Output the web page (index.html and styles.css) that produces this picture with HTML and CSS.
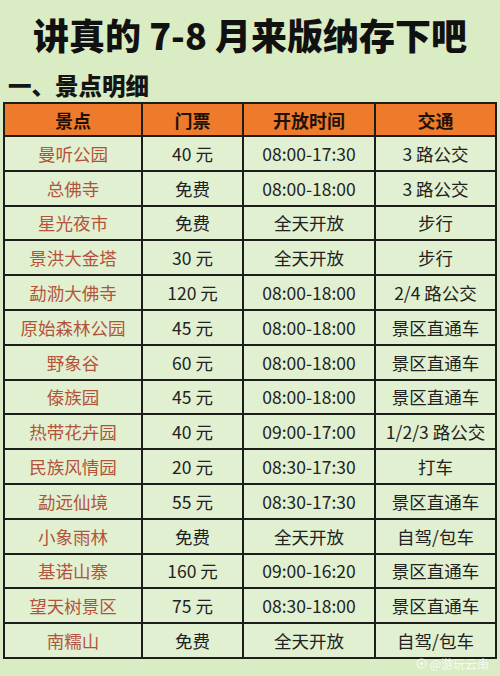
FILE: index.html
```html
<!DOCTYPE html>
<html lang="zh">
<head>
<meta charset="utf-8">
<link rel="stylesheet" href="styles.css">
</head>
<body>
<div class="page">
  <h1 class="title">讲真的 7-8 月来版纳存下吧</h1>
  <h2 class="subtitle">一、景点明细</h2>
  <div class="table">
    <div class="cell head">景点</div><div class="cell head">门票</div><div class="cell head">开放时间</div><div class="cell head">交通</div>
    <div class="cell name">曼听公园</div><div class="cell">40 元</div><div class="cell">08:00-17:30</div><div class="cell">3 路公交</div>
    <div class="cell name">总佛寺</div><div class="cell">免费</div><div class="cell">08:00-18:00</div><div class="cell">3 路公交</div>
    <div class="cell name">星光夜市</div><div class="cell">免费</div><div class="cell">全天开放</div><div class="cell">步行</div>
    <div class="cell name">景洪大金塔</div><div class="cell">30 元</div><div class="cell">全天开放</div><div class="cell">步行</div>
    <div class="cell name">勐泐大佛寺</div><div class="cell">120 元</div><div class="cell">08:00-18:00</div><div class="cell">2/4 路公交</div>
    <div class="cell name">原始森林公园</div><div class="cell">45 元</div><div class="cell">08:00-18:00</div><div class="cell">景区直通车</div>
    <div class="cell name">野象谷</div><div class="cell">60 元</div><div class="cell">08:00-18:00</div><div class="cell">景区直通车</div>
    <div class="cell name">傣族园</div><div class="cell">45 元</div><div class="cell">08:00-18:00</div><div class="cell">景区直通车</div>
    <div class="cell name">热带花卉园</div><div class="cell">40 元</div><div class="cell">09:00-17:00</div><div class="cell">1/2/3 路公交</div>
    <div class="cell name">民族风情园</div><div class="cell">20 元</div><div class="cell">08:30-17:30</div><div class="cell">打车</div>
    <div class="cell name">勐远仙境</div><div class="cell">55 元</div><div class="cell">08:30-17:30</div><div class="cell">景区直通车</div>
    <div class="cell name">小象雨林</div><div class="cell">免费</div><div class="cell">全天开放</div><div class="cell">自驾/包车</div>
    <div class="cell name">基诺山寨</div><div class="cell">160 元</div><div class="cell">09:00-16:20</div><div class="cell">景区直通车</div>
    <div class="cell name">望天树景区</div><div class="cell">75 元</div><div class="cell">08:30-18:00</div><div class="cell">景区直通车</div>
    <div class="cell name">南糯山</div><div class="cell">免费</div><div class="cell">全天开放</div><div class="cell">自驾/包车</div>
    <div class="watermark"><svg width="11" height="11" viewBox="0 0 11 11"><circle cx="5.5" cy="5.5" r="4.5" fill="none" stroke="currentColor" stroke-width="1.2"/><circle cx="5.5" cy="5.5" r="1.6" fill="currentColor"/></svg><span>@游玩云南</span></div>
  </div>
</div>
</body>
</html>
```
FILE: styles.css
```css
html, body {
  margin: 0;
  padding: 0;
}
body {
  background: #d9ecc4;
  font-family: "Noto Sans CJK SC", "Noto Sans", sans-serif;
  color: #222;
}
.page {
  width: 500px;
  height: 676px;
  overflow: hidden;
}
.title {
  margin: 0;
  padding-top: 14px;
  font-size: 36px;
  line-height: 40px;
  font-weight: 900;
  text-align: center;
  color: #111;
}
.subtitle {
  margin: 17px 0 0;
  padding-left: 8px;
  font-size: 23.5px;
  line-height: 28px;
  font-weight: 900;
  color: #151515;
}
.table {
  position: relative;
  margin: 3px 0 0 3px;
  width: 494px;
  height: 557px;
  box-sizing: border-box;
  padding: 2px;
  background: #1d1d1b;
  display: grid;
  grid-template-columns: 136px 99px 130px 119px;
  grid-template-rows: 31px repeat(15, 1fr);
  gap: 2px;
}
.cell {
  background: #e1f0d0;
  display: flex;
  align-items: center;
  justify-content: center;
  font-size: 17.5px;
  color: #222;
  white-space: nowrap;
}
.cell.head {
  background: #ee7a2b;
  font-weight: 700;
  color: #1e1207;
  font-size: 18px;
}
.cell.name {
  color: #b4533b;
}
.watermark {
  position: absolute;
  right: 8px;
  bottom: -11px;
  display: flex;
  align-items: center;
  gap: 3px;
  font-size: 12px;
  line-height: 13px;
  color: rgba(255, 255, 255, 0.8);
}
```
